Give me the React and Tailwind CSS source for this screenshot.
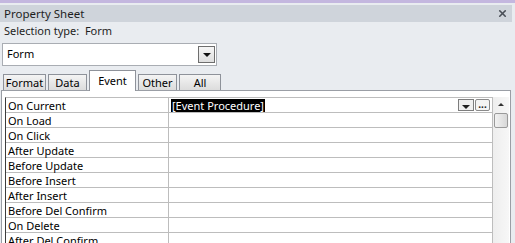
import { X } from 'lucide-react'

const rows = [
  'On Current',
  'On Load',
  'On Click',
  'After Update',
  'Before Update',
  'Before Insert',
  'After Insert',
  'Before Del Confirm',
  'On Delete',
  'After Del Confirm',
]

const tabs = ['Format', 'Data', 'Event', 'Other', 'All']
const tabWidths = { Format: 'w-[43px]', Data: 'w-[39px]', Event: 'w-[47px]', Other: 'w-[39px]', All: 'w-[42px]' }

function Tab({ label }) {
  if (label === 'Event') {
    return (
      <div className={`${tabWidths[label]} relative z-10 -mb-px flex h-[21px] items-start justify-center border border-b-0 border-[#8e929a] bg-white pt-[2px]`}>
        {label}
      </div>
    )
  }
  return (
    <div className={`${tabWidths[label]} flex h-[16px] items-center justify-center border border-b-0 border-[#8e929a] bg-gradient-to-b from-[#f4f4f4] to-[#dcdcdc] pt-px`}>
      {label}
    </div>
  )
}

function Row({ label, first }) {
  return (
    <div className="flex h-[15px] border-b border-[#bdbdbd]">
      <div className="flex w-[163px] shrink-0 items-center border-r border-[#bdbdbd] pl-[2px] leading-none">{label}</div>
      <div className="flex flex-1 items-center">
        {first ? (
          <>
            <span className="ml-[2px] flex h-[13px] items-center bg-black px-[1px] leading-none text-white">[Event Procedure]</span>
            <span className="ml-auto flex h-[12px] w-[16px] items-end justify-center border border-[#7d7d7d] bg-[#f0f0f0] pb-[1px]">
              <span className="h-0 w-0 border-x-[4px] border-t-[4px] border-x-transparent border-t-[#202020]" />
            </span>
            <span className="ml-[1px] mr-[2px] flex h-[12px] w-[15px] items-center justify-center rounded-[2px] border border-[#8a8a8a] bg-[#f4f4f4] pb-[3px] text-[10px] font-bold leading-none text-[#222]">
              ...
            </span>
          </>
        ) : null}
      </div>
    </div>
  )
}

export default function App() {
  return (
    <div className="relative h-[243px] w-[515px] overflow-hidden bg-[#e9ecf0] text-[11px] text-black" style={{ fontFamily: '"Noto Sans", "Liberation Sans", sans-serif' }}>
      <div className="h-[3px] bg-[#c4b7df]" />
      <div className="h-[2px]" />
      <div className="mr-[3px] flex h-[17px] items-center justify-between bg-[#cfd4db] pl-[4px] pr-[4px] text-[11.5px] text-[#1e1e1e]">
        <span>Property Sheet</span>
        <X size={11} strokeWidth={3.5} className="text-[#4a4f57]" />
      </div>
      <div className="flex h-[18px] items-center pl-[4px] text-[#1e1e1e]">Selection type:&nbsp;&nbsp;Form</div>
      <div className="ml-[2px] mt-[3px] flex h-[23px] w-[215px] items-center justify-between border border-[#a9adb3] bg-white pl-[4px] pr-[1px]">
        <span>Form</span>
        <span className="flex h-[17px] w-[17px] items-center justify-center border border-[#6e6e6e] bg-gradient-to-b from-[#f6f6f6] to-[#dedede]">
          <span className="h-0 w-0 border-x-[4px] border-t-[4px] border-x-transparent border-t-[#111]" />
        </span>
      </div>
      <div className="ml-[3px] mt-[4px] flex h-[20px] items-end gap-[2px]">
        {tabs.map((t) => (
          <Tab key={t} label={t} />
        ))}
      </div>
      <div className="ml-[1px] mr-[4px] h-[160px] border border-b-0 border-[#9a9ea5] bg-white pl-[3px] pr-[1px] pt-[6px]">
        <div className="flex">
          <div className="w-[487px] border-l border-t border-[#3c3c3c] border-t-[#bdbdbd]">
            {rows.map((r, i) => (
              <Row key={i} label={r} first={i === 0} />
            ))}
          </div>
          <div className="flex h-[160px] w-[17px] flex-col items-center border-l border-[#bdbdbd] bg-gradient-to-r from-[#eeeeee] to-[#f7f7f7]">
            <span className="mt-[6px] h-0 w-0 border-x-[3px] border-b-[3px] border-x-transparent border-b-[#333]" />
            <span className="mt-[7px] h-[15px] w-[14px] rounded-[2px] border border-[#9a9a9a] bg-gradient-to-r from-[#f2f2f2] to-[#d8d8d8]" />
          </div>
        </div>
      </div>
    </div>
  )
}
